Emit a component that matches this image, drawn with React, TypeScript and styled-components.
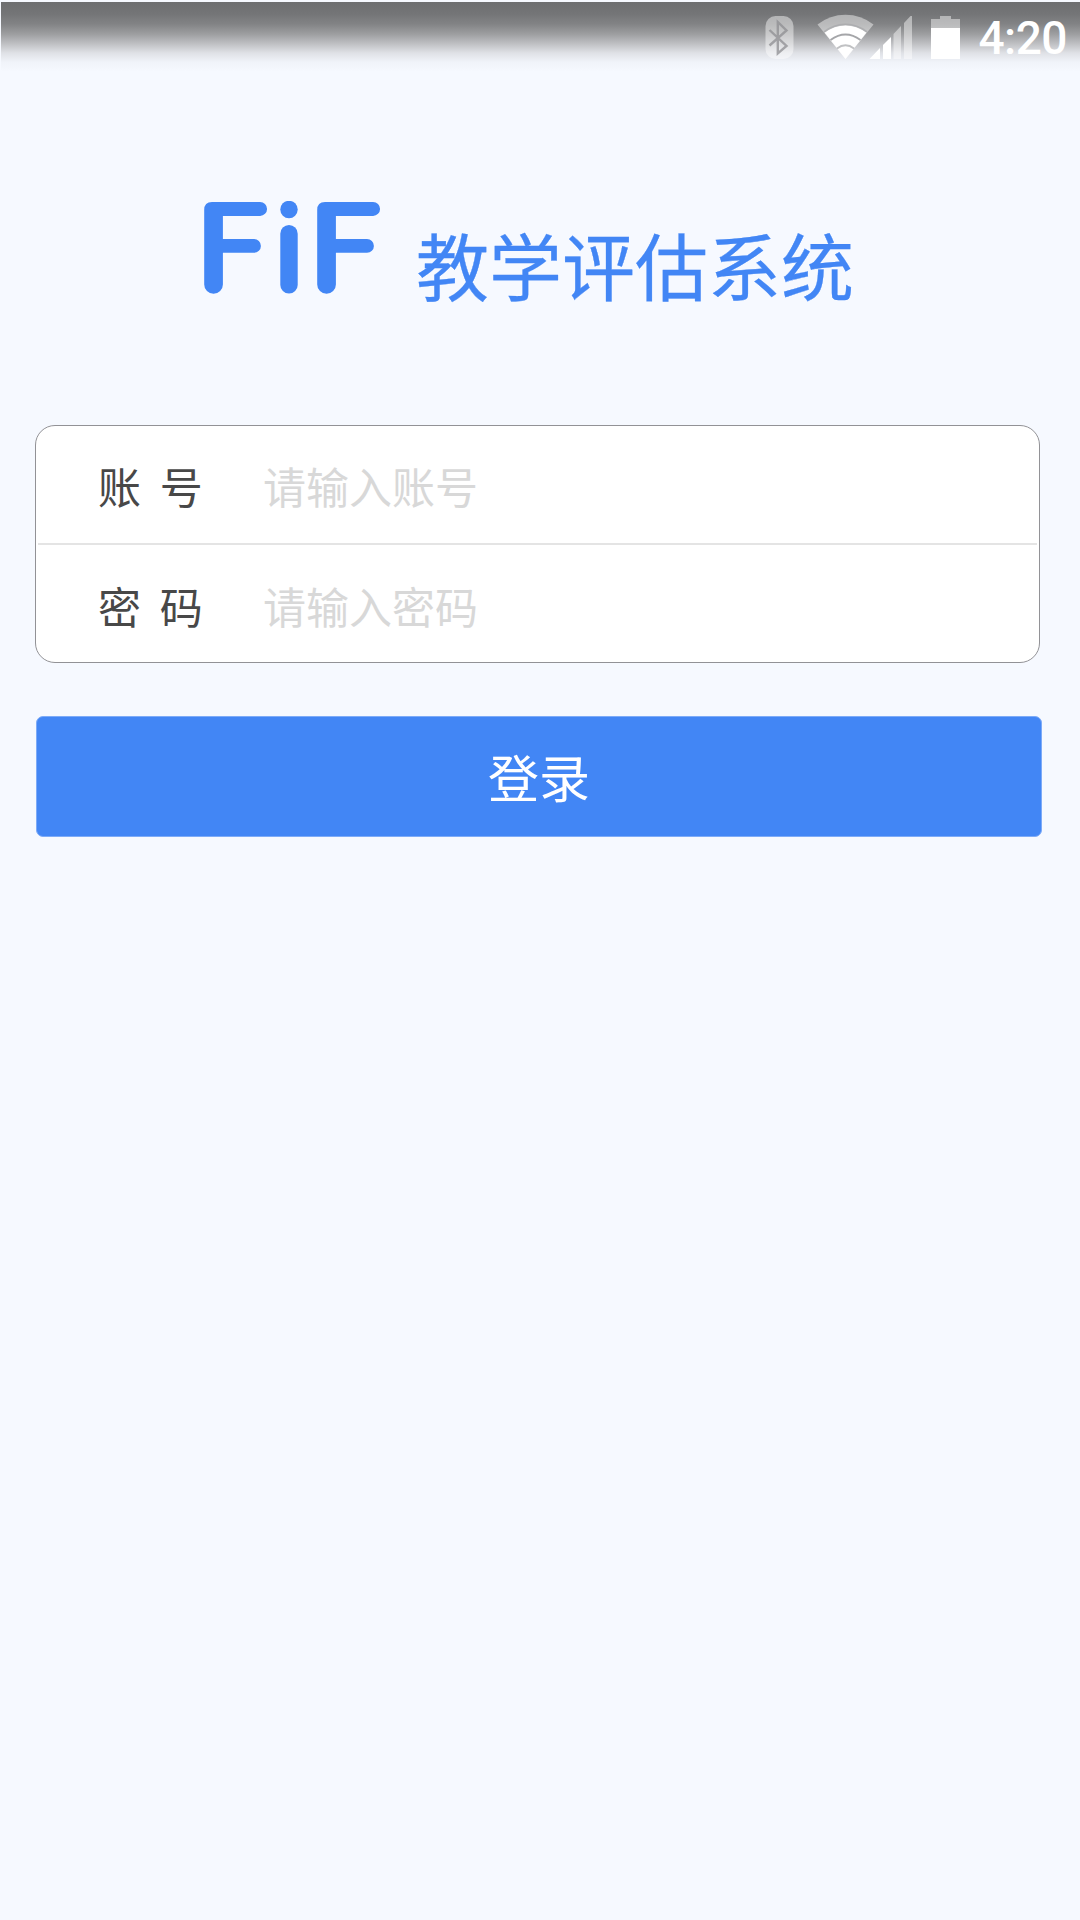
import React from 'react';
import styled, { createGlobalStyle } from 'styled-components';

const BLUE = '#4286f5';
const PAGE = '#f6f9ff';

const GlobalStyle = createGlobalStyle`
  * { box-sizing: border-box; }
  body {
    margin: 0;
    background: ${PAGE};
    font-family: "Noto Sans CJK SC", "Noto Sans", sans-serif;
  }
`;

const Screen = styled.div`
  display: flex;
  flex-direction: column;
  width: 1080px;
  height: 1920px;
  padding: 2px 0 0 1px;
  overflow: hidden;
  background: ${PAGE};
`;

const StatusBar = styled.header`
  display: flex;
  align-items: flex-start;
  justify-content: flex-end;
  height: 74px;
  padding: 12px 13px 0 0;
  background: linear-gradient(
    to bottom,
    #6d6e70 0,
    #747577 12px,
    #828385 22px,
    #9d9ea0 32px,
    #c0c1c4 42px,
    #dfe1e6 51px,
    #f0f3f9 60px,
    ${PAGE} 70px
  );
`;

const StatusIcons = styled.svg`
  width: 202px;
  height: 46px;
  flex: none;
`;

const Clock = styled.time`
  width: 101px;
  padding-top: 1px;
  font: 500 46px/46px Roboto, sans-serif;
  letter-spacing: -0.5px;
  text-align: right;
  color: #fff;
`;

const Brand = styled.h1`
  display: flex;
  align-items: flex-start;
  height: 349px;
  margin: 0;
  padding: 125px 0 0 203px;
`;

const Logo = styled.svg`
  width: 177px;
  height: 94px;
  flex: none;
`;

const BrandName = styled.span`
  margin: 22px 0 0 35px;
  font-size: 73px;
  line-height: 80px;
  font-weight: 400;
  color: ${BLUE};
  -webkit-text-stroke: 0.3px ${BLUE};
  white-space: nowrap;
`;

const Form = styled.form`
  display: flex;
  flex-direction: column;
  gap: 53px;
  padding-left: 34px;
`;

const Card = styled.div`
  width: 1005px;
  height: 238px;
  border: 1px solid #929296;
  border-radius: 20px;
  background: #fff;
`;

const Row = styled.label<{ $drop?: number }>`
  display: flex;
  align-items: center;
  height: 117px;
  padding: ${(p) => p.$drop ?? 0}px 0 0 62px;
  font-size: 43px;
  line-height: 60px;
`;

const Divider = styled.div`
  height: 2px;
  margin: 0 2px;
  background: #e4e4e4;
`;

const Caption = styled.span`
  width: 165px;
  color: #484848;
  word-spacing: 9px;
`;

const Field = styled.input`
  flex: 1;
  min-width: 0;
  height: 64px;
  padding: 0;
  border: 0;
  outline: 0;
  background: transparent;
  font: inherit;
  color: #454545;
  &::placeholder {
    color: #d8d8d8;
    opacity: 1;
  }
`;

const Submit = styled.button`
  width: 1006px;
  height: 121px;
  margin-left: 1px;
  padding: 0 0 2px;
  border: 1px solid #7dabf8;
  border-radius: 7px;
  background: ${BLUE};
  color: #fff;
  font: 400 51px/72px "Noto Sans CJK SC", sans-serif;
`;

const FiFLogo = () => (
  <Logo viewBox="204 201 177 94" fill={BLUE} role="img" aria-label="FiF">
    <path id="f" d="M212 202H260.100A6.900 6.900 0 0 1 260.100 215.900H222.900V239H254A6.900 6.900 0 0 1 254 252.800H222.900V284.500A9.300 9.300 0 0 1 204.200 284.500V210Q204.200 202 212 202Z" />
    <circle cx="289" cy="209.500" r="8.700" />
    <rect x="280.300" y="225" width="17.400" height="68.600" rx="8.700" />
    <use href="#f" x="113" />
  </Logo>
);

const Indicators = () => (
  <StatusIcons viewBox="764 14 202 46">
    <rect x="765.500" y="16" width="28" height="43" rx="10" fill="#fff" fillOpacity=".45" />
    <path d="M769.500 30L786.500 46L777.800 53.500V22L786.500 30.500L769.500 45.500" fill="none" stroke="#8d8e91" strokeOpacity=".75" strokeWidth="2.400" />
    <path d="M845.500 59L817.500 24.500Q830 14.800 845.500 14.800T873.500 24.500Z" fill="#fff" fillOpacity=".45" />
    <path d="M845.500 59L824.500 32.500Q834 25 845.500 25T866.500 32.500Z" fill="#fff" />
    <g fill="none" stroke="#a5a6a9" strokeWidth="1.800">
      <path d="M824 32Q834 24.500 845.500 24.500T867 32" strokeOpacity=".7" />
      <path d="M830.500 40Q845.500 29 860.500 40" />
      <path d="M837 48.500Q845.500 42 854 48.500" strokeOpacity=".7" />
    </g>
    <path d="M869.500 59L880 48V59ZM883 59V45L891 37V59Z" fill="#fff" />
    <path d="M893.500 59V34L901 26V59ZM904 59V23L910.500 16H912V59Z" fill="#fff" fillOpacity=".45" />
    <path d="M931 28V19H940V16H951V19H960V28Z" fill="#fff" fillOpacity=".45" />
    <rect x="931" y="28" width="29" height="31" fill="#fff" />
  </StatusIcons>
);

export default function App() {
  return (
    <>
      <GlobalStyle />
      <Screen>
        <StatusBar>
          <Indicators />
          <Clock>4:20</Clock>
        </StatusBar>
        <Brand>
          <FiFLogo />
          <BrandName>教学评估系统</BrandName>
        </Brand>
        <Form onSubmit={(e) => e.preventDefault()}>
          <Card>
            <Row>
              <Caption>账 号</Caption>
              <Field placeholder="请输入账号" />
            </Row>
            <Divider />
            <Row $drop={2}>
              <Caption>密 码</Caption>
              <Field type="password" placeholder="请输入密码" />
            </Row>
          </Card>
          <Submit>登录</Submit>
        </Form>
      </Screen>
    </>
  );
}
